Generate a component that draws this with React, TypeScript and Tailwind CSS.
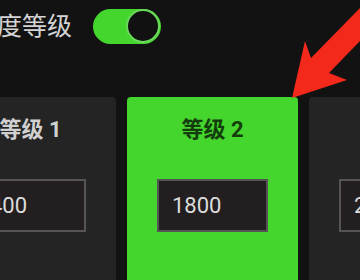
import React from "react";

const Card = ({
  title,
  value,
  active,
}: {
  title: string;
  value: string;
  active?: boolean;
}) => (
  <div
    className={
      "w-[171px] h-[200px] shrink-0 rounded-[4px] flex flex-col items-center " +
      (active ? "bg-[#44d62c]" : "bg-[#242424]")
    }
  >
    <div
      className={
        "mt-[18px] h-[30px] leading-[30px] text-[22px] font-bold " +
        (active ? "text-[#143d0e]" : "text-[#d0d0d0]")
      }
    >
      {title}
    </div>
    <div className="mt-[34px] w-[111px] h-[53px] bg-[#231f20] border-2 border-[#555555] flex items-center pl-[13px] text-[22px] text-[#dcdcdc]">
      {value}
    </div>
  </div>
);

export default function App() {
  return (
    <div
      className="relative w-[360px] h-[280px] overflow-hidden bg-[#121212]"
      style={{ fontFamily: 'Roboto, "Noto Sans CJK SC", sans-serif' }}
    >
      <div className="flex items-center h-[53px] ml-[-3px] pb-[1px]">
        <span className="text-[25px] text-[#d4d4d4] leading-none">度等级</span>
        <div className="ml-[21px] w-[68px] h-[35px] rounded-full bg-[#44d62c] flex items-center justify-end pr-[1px]">
          <div className="w-[34px] h-[34px] rounded-full bg-[#111111] border-2 border-[#6ad85a]" />
        </div>
      </div>
      <div className="flex gap-[11px] ml-[-55px] mt-[44px]">
        <Card title="等级 1" value="400" />
        <Card title="等级 2" value="1800" active />
        <Card title="等级 3" value="2400" />
      </div>
      <svg
        className="absolute left-0 top-0 pointer-events-none"
        width="360"
        height="280"
        viewBox="0 0 360 280"
      >
        <polygon
          points="292,98 305,41 311,58 364,4 364,37 329,73 347,80"
          fill="#f3291c"
        />
      </svg>
    </div>
  );
}
